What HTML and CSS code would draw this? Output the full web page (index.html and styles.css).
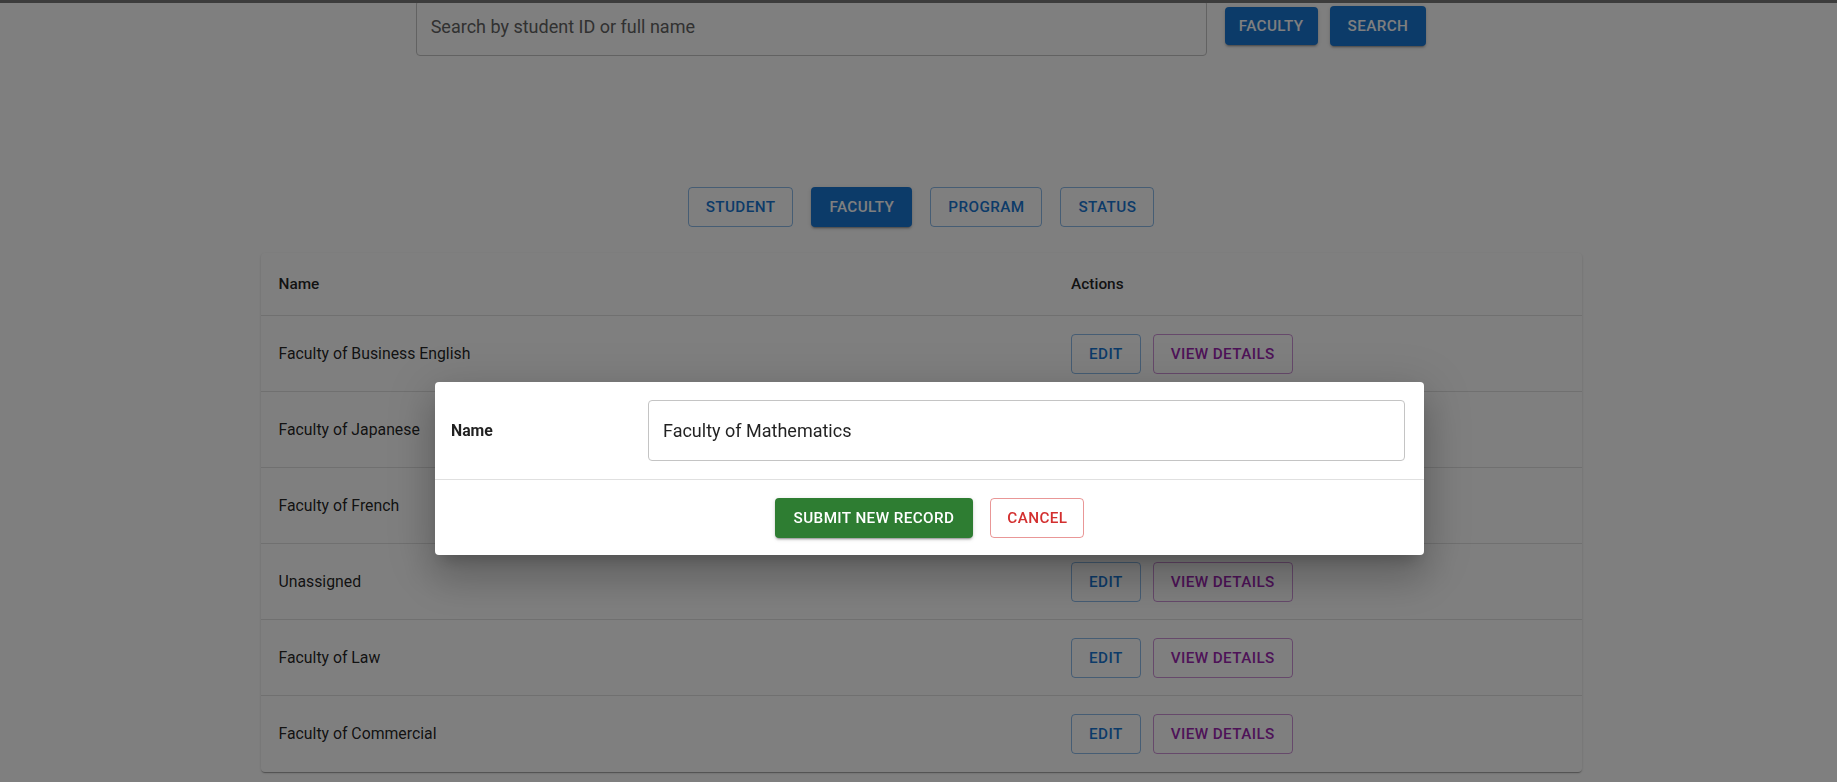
FILE: index.html
```html
<!DOCTYPE html>
<html lang="en">
<head>
<meta charset="utf-8">
<title>Faculties</title>
<link rel="stylesheet" href="styles.css">
</head>
<body>
<div class="topbar"></div>
<main class="page">
  <div class="search-row">
    <div class="search-field"><span class="placeholder">Search by student ID or full name</span></div>
    <button class="btn btn-contained btn-faculty">Faculty</button>
    <button class="btn btn-contained btn-search">Search</button>
  </div>

  <nav class="tabs">
    <button class="btn btn-outlined tab">Student</button>
    <button class="btn btn-contained tab">Faculty</button>
    <button class="btn btn-outlined tab">Program</button>
    <button class="btn btn-outlined tab">Status</button>
  </nav>

  <section class="card">
    <div class="row head">
      <div class="cell name">Name</div>
      <div class="cell actions">Actions</div>
    </div>
    <div class="row">
      <div class="cell name">Faculty of Business English</div>
      <div class="cell actions"><button class="btn btn-outlined">Edit</button><button class="btn btn-outlined purple">View Details</button></div>
    </div>
    <div class="row">
      <div class="cell name">Faculty of Japanese</div>
      <div class="cell actions"><button class="btn btn-outlined">Edit</button><button class="btn btn-outlined purple">View Details</button></div>
    </div>
    <div class="row">
      <div class="cell name">Faculty of French</div>
      <div class="cell actions"><button class="btn btn-outlined">Edit</button><button class="btn btn-outlined purple">View Details</button></div>
    </div>
    <div class="row">
      <div class="cell name">Unassigned</div>
      <div class="cell actions"><button class="btn btn-outlined">Edit</button><button class="btn btn-outlined purple">View Details</button></div>
    </div>
    <div class="row">
      <div class="cell name">Faculty of Law</div>
      <div class="cell actions"><button class="btn btn-outlined">Edit</button><button class="btn btn-outlined purple">View Details</button></div>
    </div>
    <div class="row last">
      <div class="cell name">Faculty of Commercial</div>
      <div class="cell actions"><button class="btn btn-outlined">Edit</button><button class="btn btn-outlined purple">View Details</button></div>
    </div>
  </section>
</main>

<div class="backdrop"></div>

<div class="dialog">
  <div class="dialog-body">
    <label class="field-label">Name</label>
    <div class="field-input">Faculty of Mathematics</div>
  </div>
  <div class="dialog-actions">
    <button class="btn btn-contained green">Submit New Record</button>
    <button class="btn btn-outlined red">Cancel</button>
  </div>
</div>
</body>
</html>
```

FILE: styles.css
```css
* { box-sizing: border-box; }

html, body {
  margin: 0;
  padding: 0;
  background: #ffffff;
  font-family: Roboto, "Liberation Sans", Arial, sans-serif;
  color: rgba(0, 0, 0, 0.87);
  overflow: hidden;
}

.topbar {
  position: fixed;
  top: 0;
  left: 0;
  right: 0;
  height: 3px;
  background: #787878;
  z-index: 5;
}

.page {
  padding-left: 5px;
  width: 1837px;
  height: 782px;
}

/* search */
.search-row {
  display: flex;
  justify-content: center;
  align-items: flex-start;
}

.search-field {
  width: 791px;
  height: 56px;
  border: 1px solid #c4c4c4;
  border-radius: 4px;
  padding: 0 14px;
  display: flex;
  align-items: center;
  margin-right: 18px;
}

.placeholder {
  font-size: 18px;
  color: #636363;
  padding-bottom: 3px;
}

/* buttons */
.btn {
  font-family: Roboto, "Liberation Sans", Arial, sans-serif;
  font-size: 15.25px;
  font-weight: 500;
  line-height: 24px;
  letter-spacing: 0.4px;
  text-transform: uppercase;
  border-radius: 4px;
  cursor: pointer;
  white-space: nowrap;
  background: transparent;
}

.btn-contained {
  border: 0;
  padding: 8px 18px;
  background: #1976d2;
  color: #ffffff;
  box-shadow: 0 3px 1px -2px rgba(0,0,0,0.2), 0 2px 2px 0 rgba(0,0,0,0.14), 0 1px 5px 0 rgba(0,0,0,0.12);
}

.btn-outlined {
  border: 1px solid rgba(25, 118, 210, 0.5);
  padding: 7px 17px;
  color: #1976d2;
}

.btn-faculty {
  padding: 7px 14px;
  margin-top: 7px;
  margin-right: 12px;
}

.btn-search {
  padding: 8px 18px;
  margin-top: 6px;
}

/* tabs */
.tabs {
  display: flex;
  justify-content: center;
  gap: 18px;
  margin-top: 131px;
}

.tabs .btn-outlined { padding: 7px 17px; }
.tabs .btn-contained { padding: 8px 18px; }

/* table card */
.card {
  width: 1321px;
  margin: 26px auto 0;
  background: #ffffff;
  border-radius: 4px;
  box-shadow: 0 2px 1px -1px rgba(0,0,0,0.2), 0 1px 1px 0 rgba(0,0,0,0.14), 0 1px 3px 0 rgba(0,0,0,0.12);
}

.row {
  display: grid;
  grid-template-columns: 60% 40%;
  height: 76px;
  border-bottom: 1px solid #e0e0e0;
}

.row.head { height: 63px; }
.row.last { border-bottom: 0; }

.cell {
  display: flex;
  align-items: center;
  padding: 0 18px;
  font-size: 15.8px;
  line-height: 22px;
}

.head .cell { font-weight: 500; font-size: 15.4px; }

.cell.actions { gap: 12px; }

.purple {
  color: #9c27b0;
  border-color: rgba(156, 39, 176, 0.5);
}

/* backdrop */
.backdrop {
  position: fixed;
  inset: 0;
  background: rgba(0, 0, 0, 0.5);
  z-index: 10;
}

/* dialog */
.dialog {
  position: absolute;
  left: 435px;
  top: 382px;
  width: 989px;
  background: #ffffff;
  border-radius: 4px;
  z-index: 20;
  box-shadow: 0 11px 15px -7px rgba(0,0,0,0.2), 0 24px 38px 3px rgba(0,0,0,0.14), 0 9px 46px 8px rgba(0,0,0,0.12);
}

.dialog-body {
  display: grid;
  grid-template-columns: 197px 1fr;
  align-items: center;
  padding: 18px 19px 18px 16px;
  border-bottom: 1px solid #e0e0e0;
}

.field-label {
  font-size: 15.8px;
  font-weight: 700;
  color: rgba(0, 0, 0, 0.87);
}

.field-input {
  height: 61px;
  border: 1px solid #c4c4c4;
  border-radius: 4px;
  padding: 0 14px;
  display: flex;
  align-items: center;
  font-size: 18px;
  color: rgba(0, 0, 0, 0.87);
}

.dialog-actions {
  display: flex;
  justify-content: center;
  gap: 17px;
  padding: 18px 0 17px;
}

.green {
  background: #2e7d32;
  padding: 8px 19px;
}

.red {
  color: #d32f2f;
  border-color: rgba(211, 47, 47, 0.5);
  padding: 7px 16px;
}
```
